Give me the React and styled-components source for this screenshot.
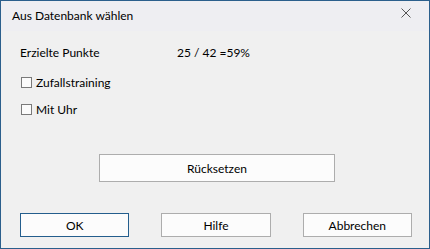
import React from "react";
import styled, { createGlobalStyle } from "styled-components";

const GlobalStyle = createGlobalStyle`
  html, body {
    margin: 0;
    padding: 0;
    background: #f0f0f0;
  }
  body {
    font-family: "Segoe UI", Lato, "Open Sans", sans-serif;
    font-size: 12px;
    color: #000;
  }
`;

const Window = styled.div`
  box-sizing: border-box;
  width: 430px;
  height: 249px;
  border: 1px solid #2b5f8c;
  background: #f0f0f0;
  display: flex;
  flex-direction: column;
`;

const TitleBar = styled.div`
  height: 30px;
  background: #eeeef2;
  display: flex;
  align-items: center;
  justify-content: space-between;
  padding: 0 0 0 11px;
`;

const Title = styled.span`
  margin-top: -2px;
`;

const CloseBtn = styled.div`
  width: 46px;
  height: 30px;
  display: flex;
  align-items: flex-start;
  justify-content: center;
  padding-top: 7px;
  box-sizing: border-box;
`;

const Body = styled.div`
  flex: 1;
  display: flex;
  flex-direction: column;
  padding: 13px 17px 0 19px;
`;

const InfoRow = styled.div`
  display: flex;
  align-items: center;
  height: 16px;
`;

const Label = styled.span`
  width: 157px;
  flex: none;
`;

const CheckRow = styled.label`
  display: flex;
  align-items: center;
  gap: 4px;
  height: 16px;
  margin-top: ${({ $gap }) => $gap}px;
`;

const Box = styled.span`
  box-sizing: border-box;
  width: 11px;
  height: 11px;
  margin-left: 1px;
  border: 1px solid #7a7a7a;
  background: #fbfbfb;
`;

const ResetRow = styled.div`
  display: flex;
  margin-top: 37px;
  padding-left: 79px;
`;

const Button = styled.button`
  box-sizing: border-box;
  font-family: inherit;
  font-size: inherit;
  color: #000;
  background: #fcfcfc;
  border: 1px solid ${({ $primary }) => ($primary ? "#245e8d" : "#adadad")};
  width: ${({ $w }) => $w}px;
  height: ${({ $h }) => $h}px;
  padding: 0;
`;

const Footer = styled.div`
  display: flex;
  gap: 32px;
  margin-top: 31px;
`;

export default function App() {
  return (
    <>
      <GlobalStyle />
      <Window>
        <TitleBar>
          <Title>Aus Datenbank wählen</Title>
          <CloseBtn>
            <svg width="10" height="10" viewBox="0 0 10 10">
              <path d="M0.5 0.5 L9.5 9.5 M9.5 0.5 L0.5 9.5" stroke="#555" strokeWidth="1" fill="none" />
            </svg>
          </CloseBtn>
        </TitleBar>
        <Body>
          <InfoRow>
            <Label>Erzielte Punkte</Label>
            <span>25 / 42 =59%</span>
          </InfoRow>
          <CheckRow $gap={14}>
            <Box />
            <span>Zufallstraining</span>
          </CheckRow>
          <CheckRow $gap={11}>
            <Box />
            <span>Mit Uhr</span>
          </CheckRow>
          <ResetRow>
            <Button $w={236} $h={28}>Rücksetzen</Button>
          </ResetRow>
          <Footer>
            <Button $primary $w={110} $h={24}>OK</Button>
            <Button $w={110} $h={24}>Hilfe</Button>
            <Button $w={110} $h={24}>Abbrechen</Button>
          </Footer>
        </Body>
      </Window>
    </>
  );
}
